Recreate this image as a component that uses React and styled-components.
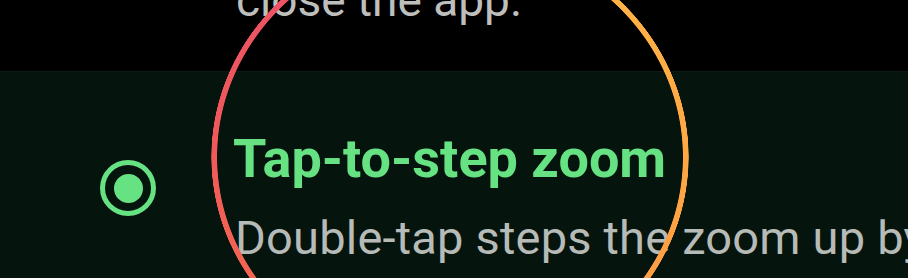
import React from "react";
import styled, { createGlobalStyle } from "styled-components";

const GlobalStyle = createGlobalStyle`
  html, body {
    margin: 0;
    padding: 0;
    background: #000;
    overflow: hidden;
  }
  body {
    font-family: Roboto, "Noto Sans", sans-serif;
  }
`;

const Screen = styled.div`
  position: relative;
  width: 908px;
  height: 278px;
  overflow: hidden;
  background: #000;
  display: flex;
  flex-direction: column;
`;

const PrevItem = styled.div`
  height: 71px;
  flex-shrink: 0;
  display: flex;
  align-items: flex-end;
  padding-left: 236px;
  overflow: hidden;
`;

const PrevText = styled.div`
  font-size: 46px;
  line-height: 1;
  color: #bdbfbd;
  margin-bottom: 48px;
  white-space: nowrap;
`;

const OptionRow = styled.div`
  flex: 1;
  display: flex;
  align-items: flex-start;
  background: #06140e;
  border-top: 1px solid #101a15;
`;

const RadioCell = styled.div`
  width: 233px;
  flex-shrink: 0;
  display: flex;
  justify-content: flex-start;
  padding-left: 100px;
  padding-top: 88px;
  box-sizing: border-box;
`;

const Radio = styled.div`
  width: 56px;
  height: 56px;
  border-radius: 50%;
  border: 5px solid ${(p) => p.color};
  box-sizing: border-box;
  display: flex;
  align-items: center;
  justify-content: center;
  &::after {
    content: "";
    width: 29px;
    height: 29px;
    border-radius: 50%;
    background: ${(p) => p.color};
  }
`;

const TextCol = styled.div`
  display: flex;
  flex-direction: column;
  padding-top: 56px;
  white-space: nowrap;
`;

const Title = styled.div`
  font-size: 54px;
  font-weight: 700;
  line-height: 62px;
  color: #66e283;
`;

const Subtitle = styled.div`
  font-size: 47px;
  line-height: 76px;
  color: #b7bbb7;
  margin-top: 10px;
  margin-left: 2px;
  letter-spacing: 0.2px;
`;

const Ring = styled.div`
  position: absolute;
  left: 211px;
  top: -66px;
  width: 478px;
  height: 446px;
  border-radius: 50%;
  background: conic-gradient(
    from 0deg,
    #ffbd4a 0deg,
    #ffb247 45deg,
    #ffa744 90deg,
    #ff9a42 135deg,
    #fb7f46 180deg,
    #f56a4e 225deg,
    #f05a59 270deg,
    #ec5266 315deg,
    #ec5068 360deg
  );
  -webkit-mask: radial-gradient(
    closest-side,
    transparent calc(100% - 6.5px),
    #000 calc(100% - 5.7px),
    #000 calc(100% - 0.6px),
    transparent 100%
  );
  mask: radial-gradient(
    closest-side,
    transparent calc(100% - 6.5px),
    #000 calc(100% - 5.7px),
    #000 calc(100% - 0.6px),
    transparent 100%
  );
  filter: drop-shadow(0 0 6px rgba(255, 140, 60, 0.25));
  pointer-events: none;
`;

export default function App() {
  return (
    <>
      <GlobalStyle />
      <Screen>
        <PrevItem>
          <PrevText>close the app.</PrevText>
        </PrevItem>
        <OptionRow>
          <RadioCell>
            <Radio color="#66e283" />
          </RadioCell>
          <TextCol>
            <Title>Tap-to-step zoom</Title>
            <Subtitle>Double-tap steps the zoom up by</Subtitle>
          </TextCol>
        </OptionRow>
        <Ring />
      </Screen>
    </>
  );
}
